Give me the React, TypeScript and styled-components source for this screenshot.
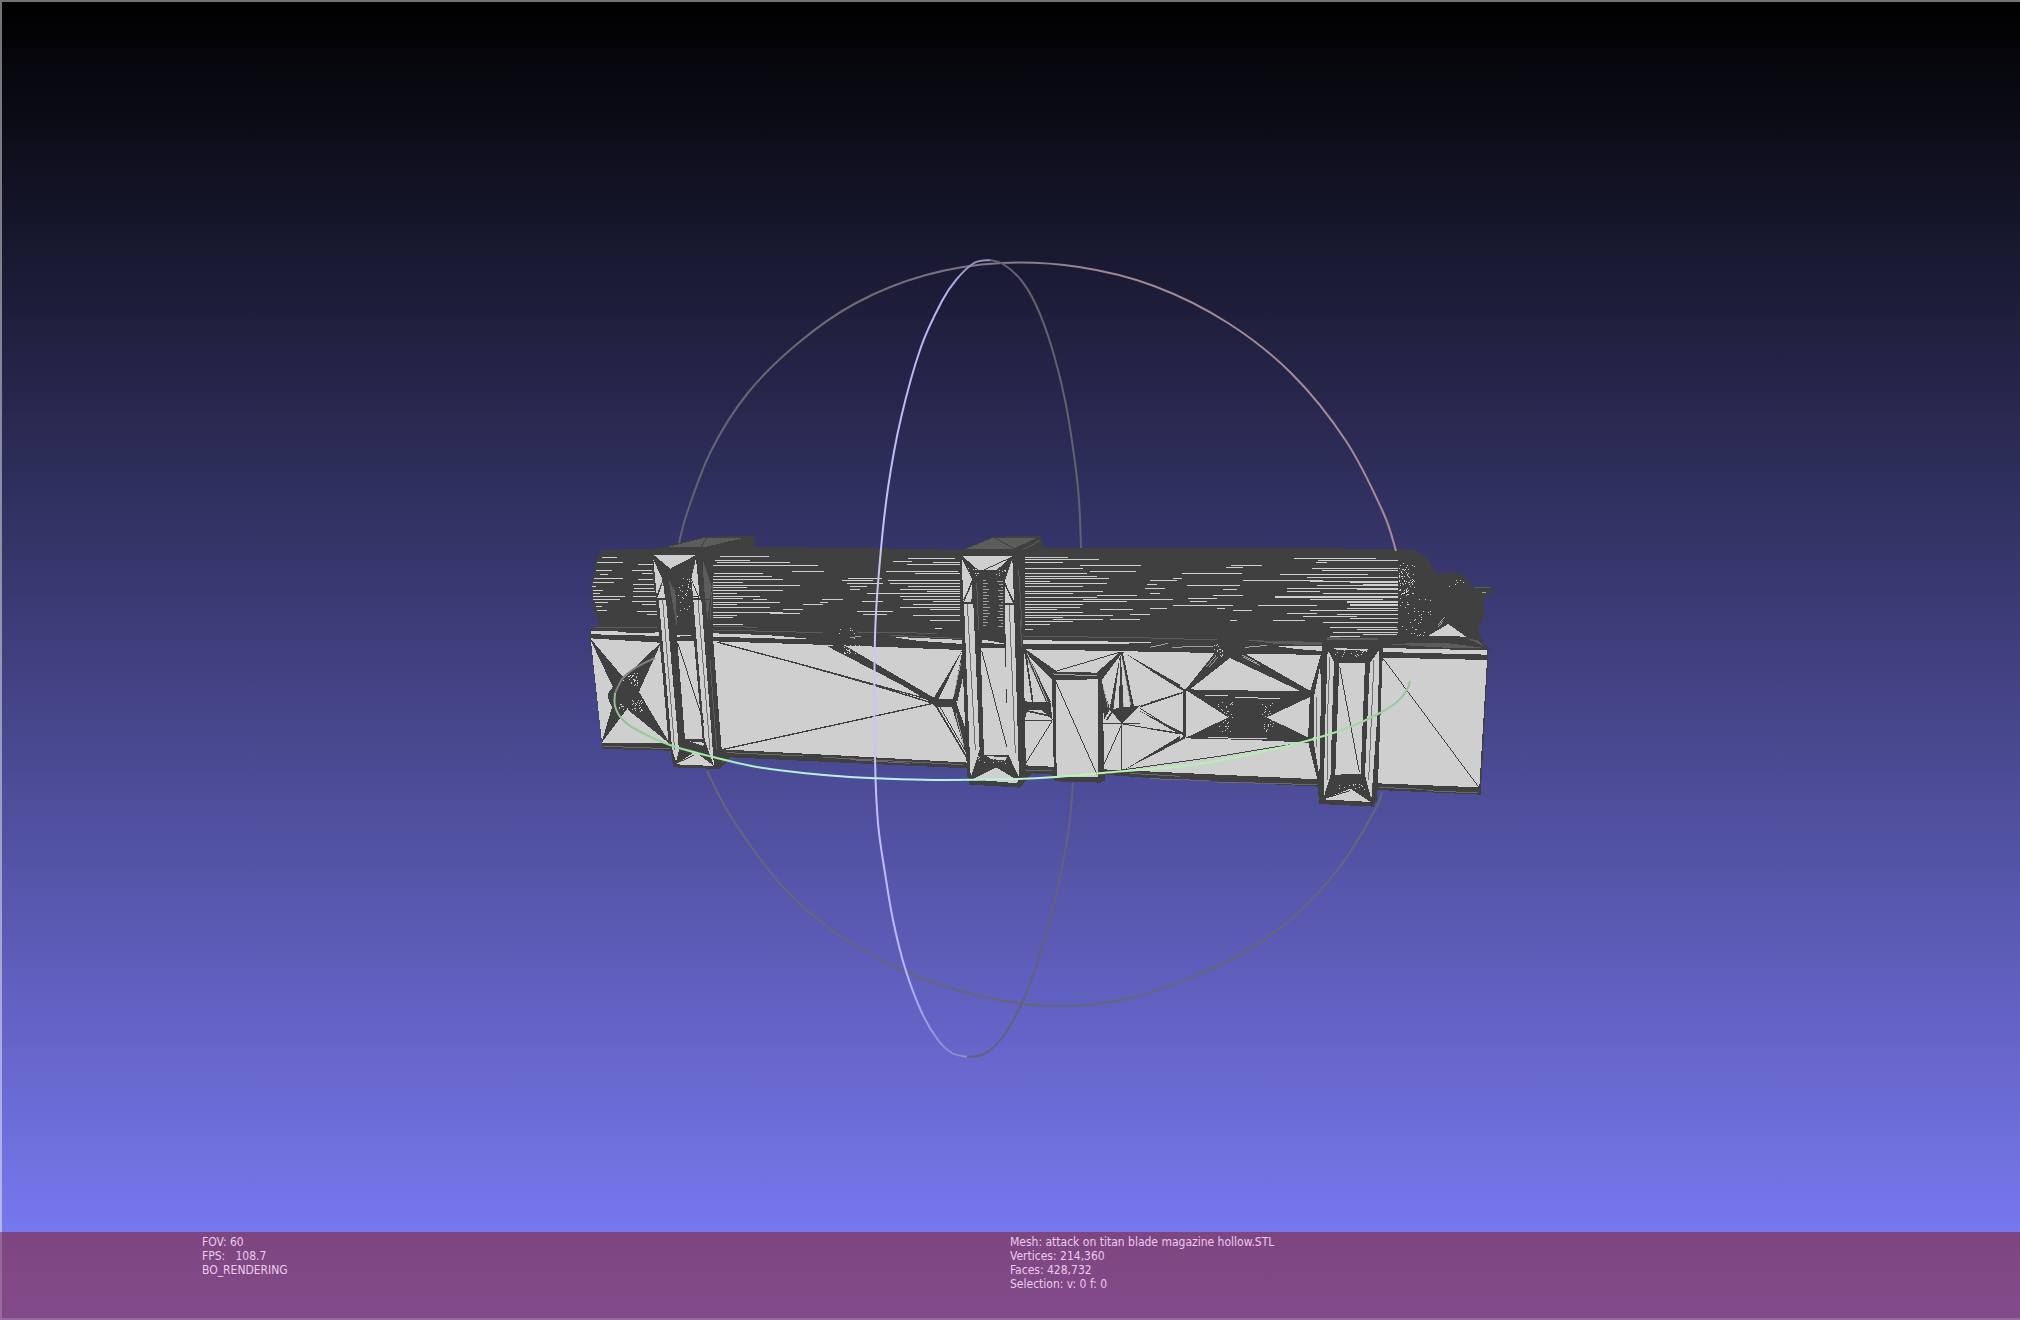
import React from "react";
import styled, { createGlobalStyle } from "styled-components";

const GlobalStyle = createGlobalStyle`
  *, *::before, *::after { box-sizing: border-box; }
  html, body { margin: 0; background: #000; }
`;

const Window = styled.div`
  display: grid;
  grid-template-rows: minmax(0, 1fr) auto;
  height: 100vh;
  background: linear-gradient(to bottom, #000000, #8080ff);
  font-family: "DejaVu Sans Condensed", "DejaVu Sans", sans-serif;
  font-stretch: condensed;
`;

const Viewport = styled.main`
  min-height: 0;
  box-shadow: inset 2px 2px 0 rgba(255, 255, 255, 0.45);
`;

const Scene = styled.svg`
  display: block;
  width: 100%;
  height: 100%;
`;

const InfoBar = styled.footer`
  display: grid;
  grid-template-columns: 4fr 5fr;
  padding: 3px 0 29px 10%;
  background: linear-gradient(to bottom, #7e4680, #824a8a);
  box-shadow: inset 2px -2px 0 rgba(255, 255, 255, 0.18);
`;

const InfoList = styled.ul`
  margin: 0;
  padding: 0;
  list-style: none;
`;

const InfoLine = styled.li`
  color: #eccbee;
  font-size: 12px;
  line-height: 14px;
  white-space: pre;
`;

const DARK = "#404040";
const LIGHT = "#cfcfcf";
const MID = "#5c5c5c";
const SOFT = "#7c7c7c";

/* ---- small drawing helpers ---- */

const Polys = ({ fill, list }: { fill: string; list: string[] }) => (
  <g fill={fill}>
    {list.map((points, i) => (
      <polygon key={i} points={points} />
    ))}
  </g>
);

const Edges = ({ width = 3, color = DARK, list }: { width?: number; color?: string; list: string[] }) => (
  <g stroke={color} strokeWidth={width} fill="none">
    {list.map((points, i) => (
      <polyline key={i} points={points} />
    ))}
  </g>
);

/* each streak is [y, from, to] */
type Streak = [number, number, number];

const Streaks = ({ list, width = 3 }: { list: Streak[]; width?: number }) => (
  <path
    d={list.map(([y, a, b]) => `M${a} ${y}H${b}`).join("")}
    stroke={LIGHT}
    strokeWidth={width}
    fill="none"
  />
);

const Speckle = ({ x, y, w, h, n, color = LIGHT, seed = 7 }: {
  x: number; y: number; w: number; h: number; n: number; color?: string; seed?: number;
}) => {
  let s = seed;
  const next = () => {
    s = (s * 16807) % 2147483647;
    return s / 2147483647;
  };
  next();
  next();
  let d = "";
  for (let i = 0; i < n; i++) {
    const px = x + Math.floor((next() * w) / 3) * 3;
    const py = y + Math.floor((next() * h) / 3) * 3;
    d += `M${px} ${py}h3v3h-3z`;
  }
  return <path d={d} fill={color} />;
};

/* smooth curve through a list of points */
const Curve = ({ points, stroke, width = 2 }: { points: string; stroke: string; width?: number }) => {
  const p = points.split(" ").map((pair) => pair.split(",").map(Number));
  let d = `M${p[0][0]} ${p[0][1]}`;
  for (let i = 0; i < p.length - 1; i++) {
    const a = p[Math.max(i - 1, 0)];
    const b = p[i];
    const c = p[i + 1];
    const e = p[Math.min(i + 2, p.length - 1)];
    d += `C${b[0] + (c[0] - a[0]) / 6} ${b[1] + (c[1] - a[1]) / 6} ${c[0] - (e[0] - b[0]) / 6} ${c[1] - (e[1] - b[1]) / 6} ${c[0]} ${c[1]}`;
  }
  return <path d={d} stroke={stroke} strokeWidth={width} fill="none" />;
};

/* ---- tube streaks ---- */

const leftStreaks: Streak[] = [
  [112, 95, 140], [127, 80, 158], [135, 205, 248], [153, 78, 125], [152, 185, 245], [160, 215, 248],
  [165, 90, 115], [177, 72, 160], [178, 205, 250], [187, 68, 133], [195, 190, 252], [200, 66, 78],
  [206, 192, 253], [212, 68, 100], [216, 190, 256], [221, 68, 90], [230, 70, 165], [230, 190, 258],
  [240, 70, 150], [246, 185, 260], [248, 75, 115], [255, 215, 260], [260, 78, 95], [272, 80, 110],
  [275, 200, 262], [285, 230, 262],
  [109, 450, 597], [121, 435, 540], [129, 440, 660], [136, 430, 745], [154, 665, 762], [161, 432, 580],
  [170, 430, 605], [179, 430, 640], [187, 430, 520], [196, 430, 690], [204, 430, 530], [212, 430, 640],
  [221, 430, 500], [229, 430, 570], [236, 430, 520], [247, 430, 630], [254, 430, 500], [264, 430, 600],
  [269, 640, 700], [277, 430, 640], [282, 600, 690], [286, 430, 500], [294, 430, 490],
  [240, 755, 820], [247, 750, 775], [254, 700, 760], [240, 550, 590], [315, 430, 520],
];

const middleStreaks: Streak[] = [
  [115, 175, 315], [124, 130, 185], [129, 250, 330], [135, 170, 330], [154, 108, 325], [162, 195, 330],
  [175, -5, 95], [183, -25, 70], [191, -10, 100], [199, 0, 50], [208, 0, 30], [183, 115, 330],
  [191, 120, 330], [200, 175, 330], [208, 150, 330], [214, 230, 330], [222, 50, 330], [230, 150, 330],
  [238, 160, 330], [246, 35, 100], [246, 250, 330], [254, 190, 330], [262, 150, 330], [268, 240, 330],
  [276, 20, 130], [284, 40, 110], [288, 190, 330], [303, 240, 330], [325, 255, 275],
  [112, 525, 655], [118, 525, 748], [128, 525, 640], [137, 690, 872], [145, 525, 700], [156, 720, 858],
  [160, 525, 710], [170, 525, 740], [177, 525, 778], [185, 525, 600], [190, 525, 770], [199, 525, 700],
  [207, 885, 945], [214, 525, 760], [222, 525, 670], [226, 740, 860], [232, 525, 740], [240, 700, 930],
  [246, 525, 830], [254, 525, 700], [262, 525, 690], [270, 525, 620], [270, 750, 850], [278, 525, 700],
  [286, 525, 790], [294, 525, 640], [300, 610, 760], [306, 525, 670], [313, 525, 600], [330, 525, 550],
  [195, 890, 920], [284, 840, 900], [300, 780, 870],
];

const slotStreaks: Streak[] = Array.from({ length: 16 }, (_, i): Streak[] => {
  const y = 182 + i * 9;
  return [[y, 398, 408 + ((i * 7) % 13)], [y + 3, 442 + ((i * 5) % 12), 458]];
}).flat();

const rightStreaks: Streak[] = [
  [115, 432, 678], [122, 505, 745], [127, 498, 530], [137, 243, 335], [142, 228, 280], [145, 487, 745],
  [153, 515, 745], [161, 95, 275], [163, 390, 655], [172, 470, 745], [176, 70, 95], [181, 0, 80],
  [181, 278, 520], [186, 480, 745], [196, 110, 270], [196, 500, 745], [207, 410, 745], [205, 0, 40],
  [208, 220, 260], [214, 410, 510], [220, 520, 745], [220, 0, 30], [226, 190, 280], [236, 115, 200],
  [240, 0, 70], [240, 480, 700], [245, 120, 170], [256, 70, 250], [256, 325, 500], [265, 0, 50],
  [265, 200, 225], [265, 590, 745], [273, 250, 305], [273, 480, 745], [282, 410, 500], [285, 560, 745],
  [290, 460, 620], [296, 600, 745], [302, 370, 465], [302, 240, 260], [309, 520, 745], [322, 540, 740],
  [330, 620, 745], [338, 550, 745], [345, 640, 740], [351, 540, 630],
];

const wideStreaks: Streak[] = [
  [186, 600, 745], [207, 620, 745], [232, 375, 745], [246, 590, 745], [256, 600, 745], [196, 640, 745],
];

/* ---- mesh sections, each drawn at three units per pixel ---- */

const Silhouette = () => (
  <polygon
    fill={DARK}
    points="95,90 250,86 280,82 405,50 555,48 556,82 840,83 1175,90 1270,50 1410,48 1422,83 2485,86 2540,92 2575,120 2602,165 2620,158 2645,155 2680,165 2710,202 2765,200 2768,220 2740,232 2745,280 2725,325 2740,370 2756,385 2750,500 2732,824 2423,810 2412,860 2248,852 2243,800 1740,774 1600,764 1594,788 1452,784 1450,764 1385,760 1350,803 1198,794 1192,745 840,729 480,712 450,747 310,742 302,692 98,687 60,350 62,330 88,312 70,270 65,200 78,120"
  />
);

const LeftSection = () => (
  <g>
    <Streaks list={leftStreaks} />
    <Polys fill={MID} list={["290,82 405,53 525,53 400,82", "398,120 412,160 425,200 412,300 402,200", "296,180 316,215 322,330 306,240"]} />
    <Edges list={["390,84 412,52", "400,92 500,60"]} />
    <Edges color={MID} list={["75,322 260,322", "430,330 760,338", "430,318 560,322", "860,336 1100,340"]} />
    <Polys
      fill={LIGHT}
      list={[
        "62,332 130,333 190,340 270,337 270,348 180,345 62,343",
        "62,355 270,368 300,668 96,668",
        "430,340 590,345 735,358 590,355 430,350",
        "430,364 840,377 1175,390 1195,728 840,708 455,688",
        "250,104 375,106 303,148",
        "250,118 278,180 260,225",
        "279,184 285,234 262,234",
        "378,114 389,234 364,176",
        "364,182 386,234 370,234",
        "263,240 288,240 327,690 318,725 304,680",
        "370,240 394,240 432,738 404,660",
        "322,362 372,364 398,658 345,658",
        "322,344 370,347 322,350",
        "318,733 375,695 432,738",
        "358,664 402,668 400,678",
      ]}
    />
    <Polys
      fill={DARK}
      list={[
        "58,352 165,478 128,500",
        "274,366 204,522 158,478",
        "94,670 128,555 175,562",
        "300,672 172,568 206,514",
        "114,520 135,492 175,476 206,520 178,564 130,566 116,542",
        "770,378 820,374 1095,535 1095,554 990,492",
        "745,350 860,330 850,372 800,380",
      ]}
    />
    <Speckle x={174} y={458} w={30} h={40} n={28} />
    <Speckle x={186} y={540} w={32} h={36} n={26} seed={19} />
    <Speckle x={146} y={552} w={18} h={16} n={9} seed={23} />
    <Speckle x={820} y={374} w={55} h={26} n={30} seed={29} />
    <Speckle x={322} y={170} w={42} h={120} n={26} seed={31} />
    <Speckle x={800} y={320} w={55} h={35} n={8} seed={37} />
    <Edges width={4} list={["440,366 700,435 1090,542", "660,424 900,492 1090,550", "460,688 1090,550", "430,352 600,362 840,370"]} />
    <Edges width={9} list={["262,240 282,460 302,690"]} />
    <Edges
      list={[
        "324,372 402,610", "303,146 374,110", "250,238 288,238", "368,238 420,238", "264,222 278,184",
        "370,230 388,230", "320,730 372,705",
      ]}
    />
    <Edges width={2} list={["278,240 314,690", "384,240 420,690"]} />
    <Edges color={SOFT} width={2} list={["100,679 300,686", "470,698 700,708", "760,712 1180,734"]} />
    <Edges color={MID} list={["428,190 420,300", "420,420 440,690", "455,728 490,712"]} />
    <Edges color={LIGHT} width={2} list={["840,354 872,348"]} />
  </g>
);

const MiddleSection = () => (
  <g>
    <Streaks list={middleStreaks} />
    <Streaks list={slotStreaks} width={2} />
    <Polys fill={MID} list={["345,88 430,53 562,53 490,86"]} />
    <Edges list={["432,52 492,86", "495,90 560,58"]} />
    <Edges color={MID} list={["520,348 900,354", "120,346 335,356", "520,88 570,62", "506,150 516,320"]} />
    <Polys
      fill={LIGHT}
      list={[
        "120,350 337,360 337,372 200,362",
        "518,360 915,367 780,373 518,372",
        "520,388 1415,405 1408,778 760,748 525,736",
        "337,108 487,108 440,150 385,150",
        "335,116 366,178 340,245",
        "367,190 364,246 342,246",
        "487,116 492,244 464,185",
        "464,194 488,248 466,248",
        "342,252 370,252 389,690 362,772",
        "465,256 492,256 507,772 473,700",
        "392,383 465,384 474,706 402,704",
        "395,355 465,371 395,370",
        "368,778 438,742 505,782 500,790",
        "410,708 470,712 465,722 420,716",
      ]}
    />
    <Polys
      fill={DARK}
      list={[
        "240,540 318,535 322,560 255,560",
        "338,388 344,450 322,545 308,540",
        "305,558 322,558 352,640 356,728",
        "338,388 262,545 245,545",
        "516,386 524,386 622,455 740,458 808,398 818,396 757,478 764,784 612,784 606,480",
        "522,544 602,548 604,570 522,570",
        "516,540 532,570 522,610",
        "575,570 608,600 600,545",
        "778,568 870,556 816,612",
        "516,386 530,395 602,545 590,550",
        "812,395 818,395 852,560 842,565",
        "812,395 790,570 778,570",
        "812,395 822,575 806,575",
        "754,480 780,568 762,600",
        "815,394 990,494 990,508",
        "850,562 990,636 990,644",
        "818,752 990,648 990,662",
      ]}
    />
    <Polys fill={LIGHT} list={["617,480 743,478 745,770 620,770"]} />
    <Edges
      width={2}
      color={LIGHT}
      list={["330,420 272,535", "332,430 310,530", "526,402 586,545", "532,400 592,545", "810,420 792,560", "816,430 822,560", "816,420 842,555", "610,462 740,468", "318,580 342,680", "760,500 774,560"]}
    />
    <Edges width={9} list={["338,250 345,500 356,772", "516,380 524,780"]} />
    <Edges width={5} list={["255,552 352,715", "525,388 548,545", "770,600 790,570", "870,560 990,520", "528,572 600,588"]} />
    <Edges
      list={[
        "265,552 350,700", "870,565 990,640", "818,612 990,640",
        "395,392 470,680", "617,484 742,766", "620,453 812,396", "520,601 605,601", "606,604 527,730",
        "760,610 870,610", "815,600 815,750", "815,614 760,738", "815,750 1100,710 1380,664",
        "340,240 364,192", "466,192 490,244", "340,249 370,249", "465,251 494,251", "402,150 484,112",
        "370,774 425,746", "395,357 460,368",
      ]}
    />
    <Edges width={2} list={["352,252 376,690", "478,256 496,700"]} />
    <Edges color={SOFT} width={2} list={["0,719 180,730", "525,750 605,752", "840,760 990,769"]} />
    <Edges color={MID} list={["380,190 386,330", "512,300 514,380"]} />
    <Speckle x={350} y={140} w={35} h={25} n={10} seed={41} />
    <Speckle x={430} y={140} w={40} h={28} n={10} seed={43} />
    <Speckle x={385} y={705} w={90} h={26} n={12} seed={47} />
  </g>
);

const RightSection = () => (
  <g>
    <Streaks list={rightStreaks} />
    <Streaks list={wideStreaks} width={5} />
    <Polys
      fill={MID}
      list={["530,352 685,354 685,362 530,360", "285,360 515,366 515,376 380,372", "700,372 880,368 1005,384 900,384", "950,355 985,362 1000,378"]}
    />
    <Edges color={MID} list={["0,354 200,360", "975,203 1020,203"]} />
    <Edges color={LIGHT} width={2} list={["0,382 55,370", "65,382 190,378", "285,382 330,378 350,376", "995,219 1008,219"]} />
    <Polys
      fill={LIGHT}
      list={[
        "370,377 515,379 515,393 440,387",
        "835,347 895,312 948,350",
        "698,384 1012,391 1012,404 698,396",
        "698,413 1011,420 988,802 684,790",
      ]}
    />
    <Polys
      fill={DARK}
      list={[
        "104,508 482,515 482,530 350,592 480,655 480,668 300,660 104,655 235,592",
        "104,512 195,398 275,395 485,515 485,522 455,515 240,414 120,508",
        "205,340 275,340 285,402 195,402",
        "514,400 520,420 500,520 490,660 512,790 506,795 474,664 480,516",
        "517,360 697,360 692,560 680,845 508,848 514,600",
      ]}
    />
    <Polys
      fill={LIGHT}
      list={[
        "533,390 552,425 546,600 542,765 521,832 526,600",
        "568,430 645,428 632,762 556,764",
        "688,390 684,560 664,838 645,765 652,600 660,428",
        "550,384 655,388 650,392 560,390",
        "518,838 602,806 662,846",
        "510,440 508,600 506,700 494,650 492,530",
      ]}
    />
    <Edges color={LIGHT} list={["165,526 235,528", "255,532 390,536", "175,653 350,656"]} />
    <Edges width={9} list={["105,510 105,650"]} />
    <Edges width={6} list={["0,448 105,512", "0,706 105,652"]} />
    <Edges width={4} list={["0,548 105,516", "0,590 104,642", "0,626 104,643"]} />
    <Edges list={["569,440 628,756", "700,416 986,801", "522,836 600,812"]} />
    <Edges width={2} list={["540,410 532,600 534,780", "672,420 664,600 656,780", "500,530 500,680"]} />
    <Edges color={SOFT} width={2} list={["0,776 180,782", "200,786 500,794", "688,802 820,808", "830,812 985,819"]} />
    <Edges color={LIGHT} width={2} list={["862,316 885,292", "866,320 880,302", "168,442 200,404", "178,442 204,410", "275,404 320,428", "280,412 330,436"]} />
    <Speckle x={748} y={128} w={48} h={100} n={80} seed={53} />
    <Speckle x={750} y={230} w={100} h={120} n={40} seed={59} />
    <Speckle x={895} y={180} w={55} h={20} n={6} seed={61} />
    <Speckle x={200} y={545} w={48} h={90} n={34} seed={67} />
    <Speckle x={335} y={545} w={38} h={90} n={34} seed={71} />
    <Speckle x={190} y={370} w={30} h={40} n={18} seed={73} />
    <Speckle x={555} y={390} w={95} h={22} n={16} seed={79} />
    <Speckle x={545} y={792} w={100} h={20} n={14} seed={83} />
  </g>
);

/* ---- trackball rings ---- */

const Trackball = () => (
  <g>
    <defs>
      <linearGradient id="ringRed" gradientUnits="userSpaceOnUse" x1="680" y1="0" x2="1396" y2="0">
        <stop offset="0" stopColor="#62626c" />
        <stop offset="0.35" stopColor="#76707a" />
        <stop offset="0.6" stopColor="#a08890" />
        <stop offset="1" stopColor="#a88a94" />
      </linearGradient>
      <linearGradient id="ringBlue" gradientUnits="userSpaceOnUse" x1="0" y1="260" x2="0" y2="1058">
        <stop offset="0" stopColor="#9490b8" />
        <stop offset="0.05" stopColor="#b8b4f4" />
        <stop offset="0.5" stopColor="#ccc6f4" />
        <stop offset="0.9" stopColor="#b8b4ff" />
        <stop offset="1" stopColor="#8c8ac4" />
      </linearGradient>
      <linearGradient id="ringGreen" gradientUnits="userSpaceOnUse" x1="614" y1="0" x2="1410" y2="0">
        <stop offset="0" stopColor="#8cc08c" />
        <stop offset="0.12" stopColor="#a4f0a4" />
        <stop offset="0.25" stopColor="#b8f0f0" />
        <stop offset="0.42" stopColor="#b8f4e8" />
        <stop offset="0.6" stopColor="#b8f4b8" />
        <stop offset="0.85" stopColor="#b0f0b0" />
        <stop offset="1" stopColor="#94c494" />
      </linearGradient>
    </defs>
    <Curve
      stroke="url(#ringRed)"
      points="679,543 687,513 711,451 747,394 797,344 856,303 926,275 1001,263 1079,267 1154,286 1228,323 1292,374 1346,441 1383,512 1396,551"
    />
    <Curve
      stroke="#66667a"
      points="1382,792 1375,810 1339,868 1290,920 1230,960 1135,997 1057,1006 985,997 906,972 839,935 784,888 733,820 707,771"
    />
    <Curve stroke="#62626e" points="990,260 1003,264 1021,280 1036,305 1051,345 1065,400 1074,455 1079,500 1081,548" />
    <Curve stroke="#62627c" points="1073,783 1069,827 1060,877 1048,927 1036,967 1021,1005 1002,1038 984,1054 967,1057" />
    <Curve
      stroke="url(#ringBlue)"
      points="990,260 974,263 956,280 942,301 921,347 901,418 888,488 880,560 875,637 875,757 878,823 885,873 893,920 905,968 922,1013 938,1040 952,1053 967,1057"
    />
    <Curve stroke="#808080" points="655,658 637,667 623,678 615,693" />
    <Curve
      stroke="url(#ringGreen)"
      points="615,693 615,706 622,719 637,730 670,745 713,757 757,767 803,773 850,777 895,779 943,780 1017,779 1057,777 1103,773 1183,766 1233,758 1283,747 1317,738 1350,727 1380,713 1397,702 1407,690 1410,681"
    />
  </g>
);

export default function App() {
  return (
    <Window>
      <GlobalStyle />
      <Viewport>
        <Scene viewBox="0 0 2020 1232" role="img" aria-label="Mesh view">
          <g transform="translate(570 520) scale(0.33333)" shapeRendering="crispEdges">
            <Silhouette />
            <LeftSection />
            <g transform="translate(840 0)">
              <MiddleSection />
            </g>
            <g transform="translate(1740 0)">
              <RightSection />
            </g>
          </g>
          <Trackball />
        </Scene>
      </Viewport>
      <InfoBar>
        <InfoList>
          <InfoLine>FOV: 60</InfoLine>
          <InfoLine>{"FPS:   108.7"}</InfoLine>
          <InfoLine>BO_RENDERING</InfoLine>
        </InfoList>
        <InfoList>
          <InfoLine>Mesh: attack on titan blade magazine hollow.STL</InfoLine>
          <InfoLine>Vertices: 214,360</InfoLine>
          <InfoLine>Faces: 428,732</InfoLine>
          <InfoLine>Selection: v: 0 f: 0</InfoLine>
        </InfoList>
      </InfoBar>
    </Window>
  );
}
